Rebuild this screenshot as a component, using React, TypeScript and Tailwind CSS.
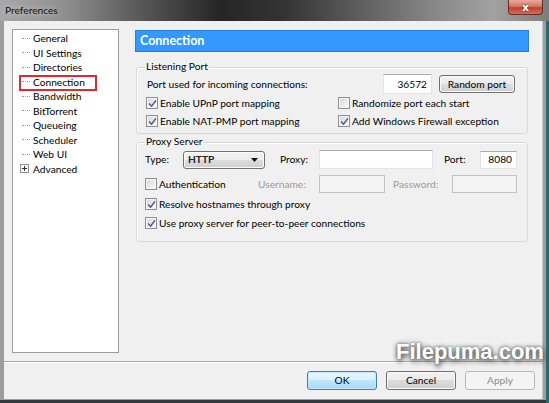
import React from "react";

const ui = "font-['Lato',sans-serif] text-[10.2px] leading-none text-black";

function Check({ checked }: { checked?: boolean }) {
  return (
    <span className="flex h-[12px] w-[12px] shrink-0 items-center justify-center border border-[#8f8f8f] bg-[linear-gradient(135deg,#d6d6d6,#fbfbfb)] shadow-[inset_0_0_0_1px_#f6f6f6]">
      {checked && (
        <svg width="9" height="9" viewBox="0 0 9 9">
          <path d="M1.2 4.6 L3.6 7.2 L7.9 1.4" fill="none" stroke="#42598a" strokeWidth="1.5" />
        </svg>
      )}
    </span>
  );
}

function CheckRow({ checked, label, className = "" }: { checked?: boolean; label: string; className?: string }) {
  return (
    <div className={`flex items-center gap-[2px] ${className}`}>
      <Check checked={checked} />
      <span>{label}</span>
    </div>
  );
}

function Btn({ children, kind = "normal", className = "" }: { children: React.ReactNode; kind?: "normal" | "default" | "disabled"; className?: string }) {
  const look =
    kind === "default"
      ? "border-[#3c7fb1] bg-[linear-gradient(#eaf6fd_0%,#d9f0fc_50%,#bee6fd_50%,#a7d9f5_100%)] shadow-[inset_0_0_0_1px_#c6e8fb]"
      : kind === "disabled"
      ? "border-[#b5b9bc] bg-[#f4f4f4] text-[#8d8d8d]"
      : "border-[#707070] bg-[linear-gradient(#f2f2f2_0%,#ebebeb_50%,#dddddd_50%,#cfcfcf_100%)] shadow-[inset_0_0_0_1px_#fbfbfb]";
  return (
    <div className={`flex items-center justify-center rounded-[3px] border ${look} ${className}`}>
      {children}
    </div>
  );
}

function Field({ value, disabled, className = "" }: { value?: string; disabled?: boolean; className?: string }) {
  return (
    <div
      className={`flex items-center justify-end border pr-[4px] ${
        disabled
          ? "border-[#c2c2c2] bg-[#f3f3f3]"
          : "border-[#e2e3ea] border-t-[#abadb3] bg-white"
      } ${className}`}
    >
      {value}
    </div>
  );
}

const treeItems = ["General", "UI Settings", "Directories", "Connection", "Bandwidth", "BitTorrent", "Queueing", "Scheduler", "Web UI"];

export default function App() {
  return (
    <div className={`relative flex h-[403px] w-[549px] flex-col overflow-hidden bg-[#3f4a4e] ${ui}`}>
      {/* title bar */}
      <div className="relative flex h-[21px] shrink-0 items-center bg-[linear-gradient(90deg,#a8a8a8_0%,#8e8e8e_12%,#5a5a5a_25%,#262626_40%,#343434_52%,#5c5c5c_65%,#8a8a8a_80%,#a2a2a2_90%,#7c7c7c_100%)] pl-[5px]">
        <span className="text-[#111] [text-shadow:0_0_6px_#e0e0e0]">Preferences</span>
        <div className="absolute right-[6px] top-0 flex h-[15px] w-[35px] items-center justify-center rounded-b-[4px] border border-t-0 border-[#6b2b22] bg-[linear-gradient(#e9a99c_0%,#d47766_45%,#c0412c_55%,#d0705a_100%)]">
          <span className="font-['DejaVu_Sans',sans-serif] text-[11px] font-bold text-white [text-shadow:0_0_2px_#5a1a10]">x</span>
        </div>
      </div>

      {/* window frame + client area */}
      <div className="flex min-h-0 flex-1 bg-[#9a9ea0] pb-[4px] pl-[4px] pr-[7px] shadow-[inset_-3px_0_0_#2f6670,inset_0_-3px_0_#33393c]">
        <div className="flex flex-1 flex-col bg-[#f0f0f0] shadow-[1px_0_0_#c8c8c8]">
          <div className="flex pl-[8px] pt-[8px]">
            {/* tree */}
            <div className="h-[324px] w-[107px] border border-[#9c9c9c] bg-white pt-[1px]">
              {treeItems.map((t) => (
                <div key={t} className="relative flex h-[14.5px] items-center">
                  <span className="ml-[9px] w-[8px] border-t border-dotted border-[#a0a0a0]" />
                  <span className="ml-[3px]">{t}</span>
                  {t === "Connection" && (
                    <span className="absolute left-[6px] top-[0.5px] h-[16px] w-[78px] border-2 border-[#e8262c]" />
                  )}
                </div>
              ))}
              <div className="flex h-[14.5px] items-center">
                <span className="ml-[7px] flex h-[9px] w-[9px] items-center justify-center border border-[#919191] bg-white">
                  <svg width="5" height="5" viewBox="0 0 5 5">
                    <path d="M0 2.5 H5 M2.5 0 V5" stroke="#333" strokeWidth="1" />
                  </svg>
                </span>
                <span className="ml-[4px]">Advanced</span>
              </div>
            </div>

            {/* right panel */}
            <div className="ml-[16px] mt-[1px] flex w-[394px] flex-col">
              <div className="flex h-[22px] items-center border border-[#2b7fd9] bg-[#3399ff] pl-[4px]">
                <span className="text-[12.5px] font-bold text-white">Connection</span>
              </div>

              <fieldset className="mx-[1px] mt-[9px] rounded-[3px] border border-[#d5d9dc] px-[9px] pb-[3px] shadow-[inset_1px_1px_0_#ffffff]">
                <legend className="ml-[-1px] h-[12px] px-[1px]">Listening Port</legend>
                <div className="mt-[1px] flex h-[20px] items-center">
                  <span className="flex-1 pl-[1px]">Port used for incoming connections:</span>
                  <Field value="36572" className="h-[20px] w-[49px]" />
                  <Btn className="ml-[7px] mr-[3px] h-[18px] w-[76px]">Random port</Btn>
                </div>
                <div className="flex h-[18px] items-center">
                  <CheckRow checked label="Enable UPnP port mapping" className="w-[192px]" />
                  <CheckRow label="Randomize port each start" />
                </div>
                <div className="flex h-[18px] items-center">
                  <CheckRow checked label="Enable NAT-PMP port mapping" className="w-[192px]" />
                  <CheckRow checked label="Add Windows Firewall exception" />
                </div>
              </fieldset>

              <fieldset className="mx-[1px] mt-[2px] rounded-[3px] border border-[#d5d9dc] px-[8px] pb-[9px] shadow-[inset_1px_1px_0_#ffffff]">
                <legend className="h-[12px] px-[1px]">Proxy Server</legend>
                <div className="mt-[2px] flex h-[19px] items-center">
                  <span className="w-[38px]">Type:</span>
                  <div className="flex h-[18px] w-[82px] items-center justify-between rounded-[3px] border border-[#707070] bg-[linear-gradient(#f2f2f2_0%,#ebebeb_50%,#dddddd_50%,#cfcfcf_100%)] pl-[4px] pr-[6px] shadow-[inset_0_0_0_1px_#fbfbfb]">
                    <span className="font-bold text-[#222]">HTTP</span>
                    <svg width="7" height="4" viewBox="0 0 7 4">
                      <path d="M0 0 H7 L3.5 4 Z" fill="#111" />
                    </svg>
                  </div>
                  <span className="ml-[15px] w-[39px]">Proxy:</span>
                  <Field className="h-[19px] w-[114px]" />
                  <span className="ml-[11px] w-[36px]">Port:</span>
                  <Field value="8080" className="h-[18px] w-[37px]" />
                </div>
                <div className="mt-[6px] flex h-[18px] items-center">
                  <CheckRow label="Authentication" className="w-[113px]" />
                  <span className="w-[61px] text-[#9a9a9a]">Username:</span>
                  <Field disabled className="h-[18px] w-[66px]" />
                  <span className="ml-[8px] w-[59px] text-[#9a9a9a]">Password:</span>
                  <Field disabled className="h-[18px] w-[65px]" />
                </div>
                <CheckRow checked label="Resolve hostnames through proxy" className="mt-[2px] h-[18px]" />
                <CheckRow checked label="Use proxy server for peer-to-peer connections" className="mt-[1px] h-[18px]" />
              </fieldset>
            </div>
          </div>

          <div className="mt-[8px] h-[1px] bg-[#a9a9a9] shadow-[0_1px_0_#ffffff]" />

          <div className="mt-[9px] flex justify-end gap-[9px] pr-[7px]">
            <Btn kind="default" className="h-[19px] w-[70px]">OK</Btn>
            <Btn className="h-[19px] w-[70px]">Cancel</Btn>
            <Btn kind="disabled" className="h-[19px] w-[70px]">Apply</Btn>
          </div>
        </div>
      </div>

      {/* watermark */}
      <div className="absolute left-[396px] top-[341px] font-['Liberation_Sans',sans-serif] text-[22px] font-bold leading-none text-white [text-shadow:0_0_2px_#777,0_0_5px_#666,1px_3px_5px_#555]">
        Filepuma.com
      </div>
    </div>
  );
}
